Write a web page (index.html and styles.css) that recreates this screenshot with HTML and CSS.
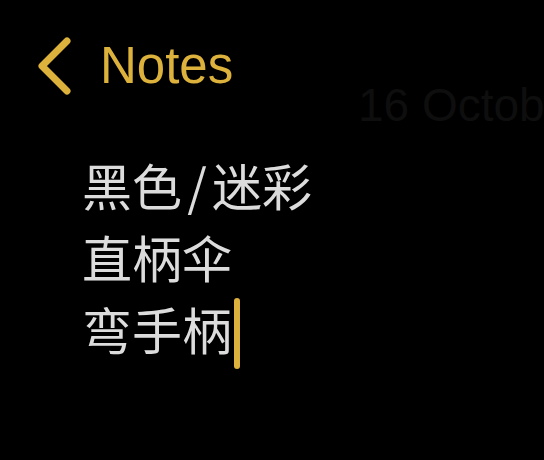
FILE: index.html
```html
<!DOCTYPE html>
<html lang="zh">
<head>
<meta charset="utf-8">
<link rel="stylesheet" href="styles.css">
</head>
<body>
<div class="screen">
  <div class="nav">
    <svg class="chev" width="36" height="58" viewBox="0 0 36 58">
      <path d="M31 4 L6 29 L31 54" fill="none" stroke="#DDB23C" stroke-width="7" stroke-linecap="round" stroke-linejoin="round"/>
    </svg>
    <span class="back">Notes</span>
  </div>
  <div class="date">16 October 2019</div>
  <div class="note">
    <div class="line">黑色<span class="slash">/</span>迷彩</div>
    <div class="line">直柄伞</div>
    <div class="line">弯手柄<span class="cursor"></span></div>
  </div>
</div>
</body>
</html>
```
FILE: styles.css
```css
html, body {
  margin: 0;
  padding: 0;
  background: #000;
}
.screen {
  width: 544px;
  height: 460px;
  overflow: hidden;
  background: #000;
}
.nav {
  display: flex;
  align-items: center;
  padding: 37px 0 0 36px;
  height: 58px;
}
.chev {
  display: block;
  flex: none;
}
.back {
  margin-left: 28px;
  font-family: "Liberation Sans", Arial, sans-serif;
  font-size: 51px;
  color: #DDB23C;
  line-height: 58px;
}
.date {
  padding-left: 358px;
  margin-top: -16px;
  white-space: nowrap;
  overflow: hidden;
  font-family: "Liberation Sans", Arial, sans-serif;
  font-size: 46px;
  line-height: 52px;
  color: #0e0e0e;
}
.note {
  padding-left: 82px;
  margin-top: 17px;
  font-family: "Noto Sans CJK SC", sans-serif;
  font-weight: 400;
  font-size: 50px;
  line-height: 72px;
  color: #DCDCDC;
}
.line {
  display: flex;
  align-items: center;
  height: 72px;
}
.slash {
  display: inline-block;
  width: 30px;
  text-align: center;
}
.cursor {
  display: inline-block;
  width: 6px;
  height: 71px;
  margin-left: 2px;
  margin-top: 10px;
  border-radius: 3px;
  background: #DDB23C;
}
```
